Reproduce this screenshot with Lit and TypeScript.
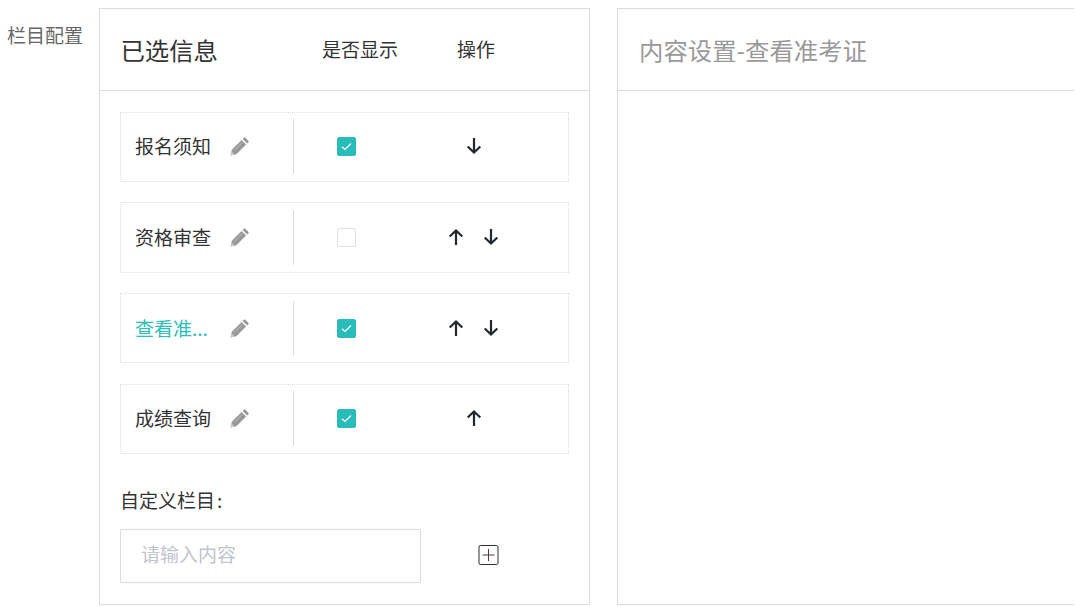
import { LitElement, html, css, svg } from "lit";
import { customElement } from "lit/decorators.js";

const pencil = html`<svg class="pencil" width="19" height="19" viewBox="0 0 19 19">
  <path fill="#999" d="M0.500 18.500l1.300-5.800L11.600 2.900l4.500 4.500-9.800 9.800z"/>
  <path fill="#999" d="M12.600 1.900l1.200-1.200c.5-.4 1.200-.4 1.600 0l3 3c.4.400.4 1.100 0 1.600l-1.300 1.200z"/>
  <path fill="#bdbdbd" d="M4 13.200L12.300 4.900l.5.500-8.300 8.300z"/>
  <path fill="#d6c8b8" d="M0.500 18.500l1-4.200 3.200 3.200z"/>
</svg>`;

const arrow = (up: boolean) => html`<svg class="arrow ${up ? "up" : ""}" width="16" height="18" viewBox="0 0 16 18">
  <path fill="none" stroke="#23272e" stroke-width="2.200" d="M8 1V15.500M1.700 9.500L8 15.500L14.300 9.500"/>
</svg>`;

const rows = [
  { name: "报名须知", checked: true, up: false, down: true, active: false },
  { name: "资格审查", checked: false, up: true, down: true, active: false },
  { name: "查看准...", checked: true, up: true, down: true, active: true },
  { name: "成绩查询", checked: true, up: true, down: false, active: false },
];

@customElement("app-root")
export class AppRoot extends LitElement {
  static styles = css`
    :host {
      display: block;
      width: 1075px;
      height: 607px;
      overflow: hidden;
      background: #fff;
      font-family: "Noto Sans CJK SC", "Liberation Sans", sans-serif;
      color: #333;
    }
    .page {
      display: flex;
      align-items: flex-start;
      padding: 8px 0 0 7px;
      box-sizing: border-box;
      width: 1074px;
      height: 607px;
      overflow: hidden;
    }
    .label {
      width: 92px;
      flex: none;
      font-size: 19px;
      line-height: 54px;
      color: #666;
      white-space: nowrap;
    }
    .panel {
      border: 1px solid #dcdcdc;
      height: 597px;
      box-sizing: border-box;
      background: #fff;
      flex: none;
    }
    .left {
      width: 491px;
    }
    .right {
      width: 480px;
      margin-left: 27px;
    }
    .head {
      height: 82px;
      box-sizing: border-box;
      border-bottom: 1px solid #dcdcdc;
      display: flex;
      align-items: center;
      padding-left: 21px;
    }
    .title {
      font-size: 24.4px;
      line-height: 1;
      white-space: nowrap;
      margin-top: 2px;
    }
    .right .head .title {
      color: #999;
    }
    .left .title {
      width: 201px;
      margin-left: -0.6px;
      margin-right: 0.6px;
    }
    .col-a {
      width: 135px;
      font-size: 19px;
      margin-top: -3px;
    }
    .col-b {
      font-size: 19px;
      margin-top: -3px;
    }
    .list {
      display: flex;
      flex-direction: column;
      gap: 20.33px;
      padding: 20.8px 20px 0 20px;
    }
    .row {
      height: 70.33px;
      box-sizing: border-box;
      border: 1px dotted #dcdcdc;
      display: flex;
      align-items: center;
      padding-left: 14px;
    }
    .name {
      width: 95px;
      font-size: 19px;
      white-space: nowrap;
      margin-top: -2.4px;
    }
    .active .name {
      color: #2abcb8;
    }
    .pencil {
      flex: none;
      margin-top: -0.4px;
    }
    .divider {
      width: 1px;
      height: 55px;
      margin-left: 44px;
      background: #dcdcdc;
      flex: none;
    }
    .check {
      width: 19px;
      height: 19px;
      box-sizing: border-box;
      flex: none;
      margin-left: 43px;
      margin-top: -0.4px;
      border-radius: 2px;
      border: 1px solid #e0e0e8;
      background: #fff;
      display: flex;
      align-items: center;
      justify-content: center;
    }
    .check.on {
      background: #2abcb8;
      border-color: #2abcb8;
    }
    .ops {
      width: 72px;
      margin-left: 81.5px;
      display: flex;
      justify-content: center;
      align-items: center;
      gap: 19px;
      margin-top: -1.4px;
    }
    .arrow {
      flex: none;
    }
    .arrow.up {
      transform: rotate(180deg);
    }
    .custom {
      padding: 0 20px;
      margin-top: 32px;
    }
    .custom-label {
      font-size: 19px;
      line-height: 28px;
    }
    .custom-colon {
      margin-left: 2px;
    }
    .custom-row {
      display: flex;
      align-items: center;
      margin-top: 15px;
    }
    .input {
      width: 301px;
      height: 54px;
      box-sizing: border-box;
      border: 1px solid #dcdcdc;
      padding-left: 20px;
      font-size: 19px;
      color: #c0c4cc;
      display: flex;
      align-items: center;
      padding-bottom: 5px;
    }
    .plus {
      margin-left: 57px;
      margin-top: -2px;
      flex: none;
    }
  `;

  render() {
    return html`<div class="page">
      <div class="label">栏目配置</div>
      <div class="panel left">
        <div class="head">
          <div class="title">已选信息</div>
          <div class="col-a">是否显示</div>
          <div class="col-b">操作</div>
        </div>
        <div class="list">
          ${rows.map(
            (r) => html`<div class="row ${r.active ? "active" : ""}">
              <div class="name">${r.name}</div>
              ${pencil}
              <div class="divider"></div>
              <div class="check ${r.checked ? "on" : ""}">
                ${r.checked
                  ? svg`<svg width="13" height="13" viewBox="0 0 13 13"><path fill="none" stroke="#fff" stroke-width="1.2" d="M2 6.8L5 9.500L11 3.500"/></svg>`
                  : ""}
              </div>
              <div class="ops">
                ${r.up ? arrow(true) : ""} ${r.down ? arrow(false) : ""}
              </div>
            </div>`
          )}
        </div>
        <div class="custom">
          <div class="custom-label">自定义栏目<span class="custom-colon">:</span></div>
          <div class="custom-row">
            <div class="input">请输入内容</div>
            <svg class="plus" width="21" height="20" viewBox="0 0 21 20">
              <rect x="1" y="0.5" width="19" height="19" rx="1.500" fill="none" stroke="#2b2f36"/>
              <path d="M10.500 4v12M4.500 10h12" stroke="#5a3348" stroke-width="1" fill="none"/>
            </svg>
          </div>
        </div>
      </div>
      <div class="panel right">
        <div class="head"><div class="title">内容设置-查看准考证</div></div>
      </div>
    </div>`;
  }
}
